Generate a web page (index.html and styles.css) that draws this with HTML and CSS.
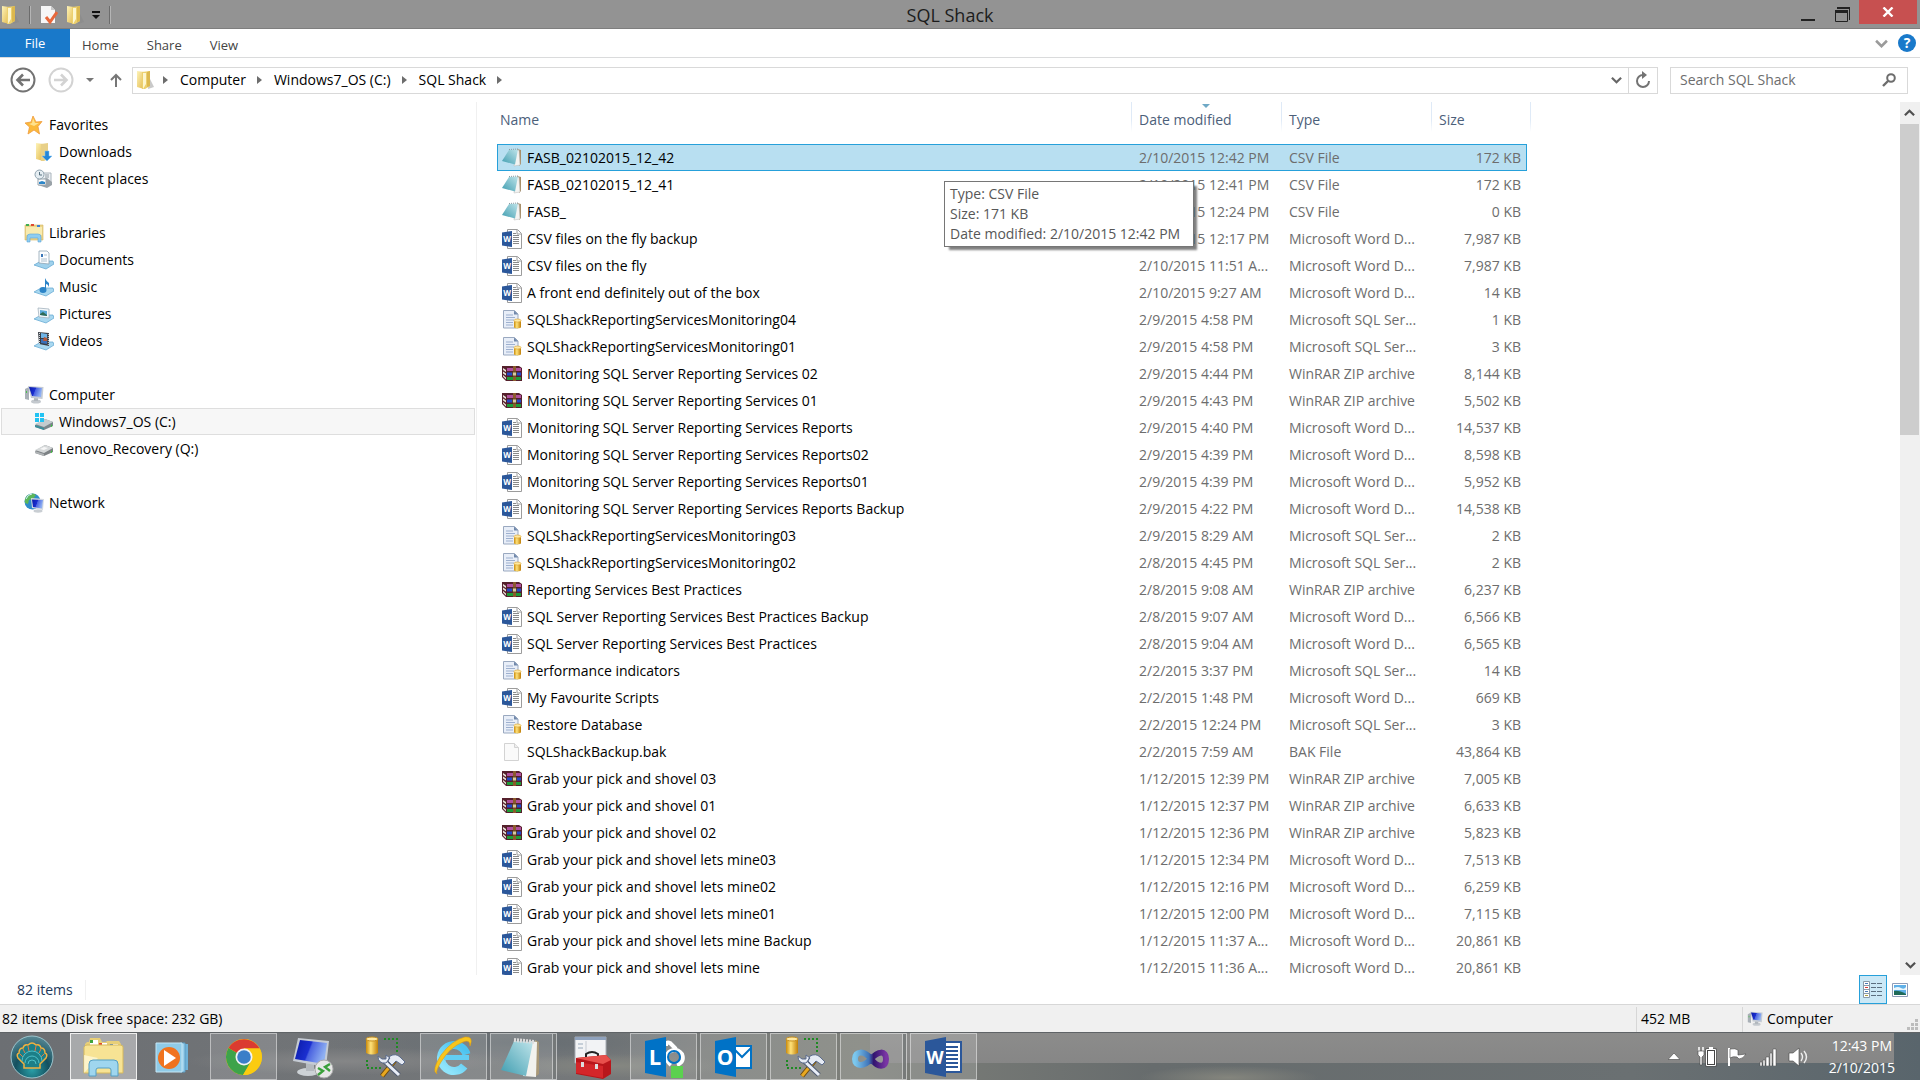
FILE: index.html
```html
<!DOCTYPE html>
<html lang="en">
<head>
    <meta charset="UTF-8">
    <meta name="viewport" content="width=device-width, initial-scale=1.0">
    <title>SQL Shack</title>
    <link rel="stylesheet" href="styles.css">
</head>
<body>
    <!-- icon sprite -->
    <svg class="sprite" aria-hidden="true">
        <defs>
            <linearGradient id="gFolder" x1="0" y1="0" x2="1" y2="1"><stop offset="0" stop-color="#fdf3b8"/><stop offset="1" stop-color="#e3b94c"/></linearGradient>
            <linearGradient id="gNote" x1="0" y1="1" x2="1" y2="0"><stop offset="0" stop-color="#3f9db0"/><stop offset="1" stop-color="#bfe4ea"/></linearGradient>
            <linearGradient id="gScreen" x1="0" y1="0" x2="1" y2=".3"><stop offset="0" stop-color="#0a1aa8"/><stop offset=".5" stop-color="#1b2fd0"/><stop offset=".55" stop-color="#4a62e0"/><stop offset="1" stop-color="#8fb0f2"/></linearGradient>
            <linearGradient id="gGold" x1="0" y1="0" x2="1" y2="0"><stop offset="0" stop-color="#c98a0c"/><stop offset=".4" stop-color="#ffe27a"/><stop offset="1" stop-color="#c07f08"/></linearGradient>
            <linearGradient id="gIE" x1="0" y1="0" x2="0" y2="1"><stop offset="0" stop-color="#4cc3f0"/><stop offset="1" stop-color="#8fe4fb"/></linearGradient>
            <linearGradient id="gVS" x1="0" y1="0" x2="1" y2="0"><stop offset="0" stop-color="#7cc8ee"/><stop offset=".45" stop-color="#3f74b8"/><stop offset=".6" stop-color="#32146e"/><stop offset="1" stop-color="#7a35a4"/></linearGradient>
            <radialGradient id="gOrb" cx=".5" cy=".8" r=".8"><stop offset="0" stop-color="#2aa0a8"/><stop offset=".5" stop-color="#14505f"/><stop offset="1" stop-color="#5a8a96"/></radialGradient>
        </defs>
        <symbol id="folder" viewBox="0 0 20 20">
            <path d="M14 7l5 10-6 2z" fill="#888" opacity=".45"/>
            <path d="M2 1l7 1v17l-7-2z" fill="url(#gFolder)"/>
            <path d="M7 2l8-1v15l-5 3H7z" fill="#ecd06e"/>
            <path d="M8 3h3v11l-3 5z" fill="#fdf6cf"/>
            <path d="M12 2l3-1v15l-3 1z" fill="#dcb84e"/>
        </symbol>
        <symbol id="downloads" viewBox="0 0 20 20">
            <path d="M2 1l7 1v17l-7-2z" fill="url(#gFolder)"/>
            <path d="M7 2l7-1v16l-4 2H7z" fill="#e8d088"/>
            <path d="M11 9h4v5h3l-5 5-5-5h3z" fill="#2486d8" stroke="#7fc0f0" stroke-width=".5"/>
        </symbol>
        <symbol id="star" viewBox="0 0 20 20">
            <path d="M9 1l3 6 6-.5-4 5L15.500 19 10 15l-6 4 1.500-7L1 8l6-1z" fill="#fbb93a" stroke="#ef9a3c" stroke-width=".8"/>
            <path d="M9 3l2 5 4 0-5 3-5-2 3-1z" fill="#ffe28c"/>
        </symbol>
        <symbol id="recent" viewBox="0 0 20 20">
            <path d="M7 4h10v9H7z" fill="#eef2f5" stroke="#aab4bc"/>
            <path d="M4 11l9-2 5 4v3l-5 3-9-3z" fill="#9aa2a8"/>
            <path d="M4 10h8v6H4z" fill="#fff" stroke="#98a4ad"/>
            <path d="M5 13l3-1 3 1v2H5z" fill="#2d86c8"/>
            <circle cx="5.500" cy="5.500" r="4.500" fill="#e5edf2" stroke="#8fa2ae"/>
            <path d="M5.500 3v3H8" stroke="#56707f" fill="none"/>
            <path d="M11 6h4M11 8h4" stroke="#8d99a2"/>
        </symbol>
        <symbol id="libraries" viewBox="0 0 20 20">
            <path d="M1 2h18v15H1z" fill="#ecd58a" stroke="#d3b65e" stroke-width=".6"/>
            <path d="M2 1h3v2H2z" fill="#3fae52"/><path d="M7 1h3v2H7z" fill="#e04a32"/><path d="M13 2h3v2h-3z" fill="#3a80d8"/>
            <path d="M2 4h16v8H2z" fill="#f8ebb0"/>
            <path d="M3 19v-5q0-3 3-3h8q3 0 3 3v5h-3v-4H6v4z" fill="#8fcdf0" stroke="#5aa6d8" stroke-width=".6"/>
        </symbol>
        <symbol id="documents" viewBox="0 0 20 20">
            <path d="M0 15l7-4h12l1 3-8 5z" fill="#9fd1ec" stroke="#5ba4d0" stroke-width=".7"/>
            <path d="M5 1h8l2 2v11L5 13z" fill="#fbfdff" stroke="#8fa4b4" stroke-width=".8"/>
            <path d="M7 4h2v3H7z" fill="#3976b8"/><path d="M10 5h3M7 9h6M7 11h6" stroke="#9ab0c2" stroke-width=".8"/>
        </symbol>
        <symbol id="music" viewBox="0 0 20 20">
            <path d="M0 15l7-4h12l1 3-8 5z" fill="#a9d8f0" stroke="#5ba4d0" stroke-width=".7"/>
            <ellipse cx="9" cy="13" rx="3.500" ry="3" fill="#2b84c8"/>
            <path d="M11 13V1q1 3 4 5v4q-1-3-3-3v6z" fill="#2b84c8"/>
        </symbol>
        <symbol id="pictures" viewBox="0 0 20 20">
            <path d="M0 15l7-4h12l1 3-8 5z" fill="#a9d8f0" stroke="#5ba4d0" stroke-width=".7"/>
            <path d="M4 4l11 1v9L5 13z" fill="#f4f8fa" stroke="#a3b3be" stroke-width=".8"/>
            <path d="M6 6l7 1v5l-7-1z" fill="#5aa8d8"/><path d="M6 10l3-2 4 3v1l-7-1z" fill="#2e6a54"/>
        </symbol>
        <symbol id="videos" viewBox="0 0 20 20">
            <path d="M0 15l7-4h12l1 3-8 5z" fill="#a9d8f0" stroke="#5ba4d0" stroke-width=".7"/>
            <path d="M4 1l11 1v13L5 13z" fill="#3a3f46"/>
            <path d="M7 2l6 1v4H7z" fill="#6fb4e6"/><path d="M7 8l6 0v5l-6-1z" fill="#3c70b8"/><path d="M10 6l3 1v3l-4 0z" fill="#b5583a"/>
            <path d="M5.500 2v11M14.300 3v11" stroke="#d5d9dd" stroke-dasharray="1 1"/>
        </symbol>
        <symbol id="computer" viewBox="0 0 20 20">
            <path d="M1 4l4-2v13l-4-1z" fill="#a9b0b7"/><path d="M2.500 6v2" stroke="#4cc04c"/>
            <ellipse cx="12" cy="16.500" rx="5" ry="2" fill="#c4c9ce"/>
            <path d="M10 12h4v4h-4z" fill="#b0b6bc"/>
            <path d="M4 1l15.500 1-1 12L7 13z" fill="#c6ccd4"/>
            <path d="M5 2l13 1-1 9-9-1z" fill="url(#gScreen)"/>
        </symbol>
        <symbol id="drivec" viewBox="0 0 20 20">
            <path d="M1 13l10-6 8 3v4l-9 4-9-3z" fill="#7b878c"/>
            <path d="M1 12l9 3 9-5-8-3z" fill="#c4cccf"/><path d="M1 13l9 3v2l-9-3z" fill="#3c8f9c"/>
            <path d="M17 13l1-.500v2l-1 .5z" fill="#37c837"/>
            <path d="M1 1h4v4H1zM6 1h4v4H6zM1 6h4v4H1zM6 6h4v4H6z" fill="#22c3f3"/>
        </symbol>
        <symbol id="drive" viewBox="0 0 20 20">
            <path d="M1 12l10-6 8 3v4l-9 4-9-3z" fill="#7d8285"/>
            <path d="M1 11l9 3 9-5-8-3z" fill="#d6d9da"/><path d="M1 12l9 3v2l-9-3z" fill="#b0b4b6"/>
            <path d="M6 10l4-2 4 1-4 2z" fill="#f7f7f7"/><path d="M17 12l1-.500v2l-1 .5z" fill="#37c837"/>
        </symbol>
        <symbol id="network" viewBox="0 0 20 20">
            <circle cx="8.500" cy="8.500" r="8" fill="#2f8ccb"/>
            <path d="M4 2q5-3 8 0l-3 4-4 1-1 4-3-1q-1-5 3-8z" fill="#5cb65a"/><path d="M2 6q2-5 6-5" stroke="#d5f0ff" fill="none"/>
            <ellipse cx="14" cy="18" rx="4.500" ry="1.700" fill="#c9ced3"/>
            <path d="M7 5l13 1-1 11-11-2z" fill="#d5dae0"/><path d="M8 6.500l11 .5-1 8.500-9-1.500z" fill="url(#gScreen)"/>
        </symbol>
        <symbol id="note" viewBox="0 0 20 20">
            <path d="M15 1l4 1v14l-2 2z" fill="#a88f6a"/><path d="M14 3l3-1 1 15-6 1z" fill="#f4f4f2" stroke="#bbb" stroke-width=".5"/>
            <path d="M7 2l9-.500-3 15L0 13z" fill="url(#gNote)"/><path d="M7 1.500l9-.500" stroke="#8a9aa0" stroke-width="1" stroke-dasharray="1 1"/>
        </symbol>
        <symbol id="word" viewBox="0 0 20 20">
            <path d="M5.500.500h10l4 4v15h-14z" fill="#fff" stroke="#9c9c9c"/><path d="M15 1v4h4" fill="none" stroke="#9c9c9c"/>
            <path d="M11 4.500h3M11 6.500h6M11 8.500h6M11 10.500h6M11 12.500h6M11 14.500h6" stroke="#8a8a8a"/>
            <path d="M0 3.500l10-1.500v16L0 16.500z" fill="#2b579a"/>
            <text x="5" y="13" class="glyph" font-size="8" text-anchor="middle">W</text>
        </symbol>
        <symbol id="sql" viewBox="0 0 20 20">
            <path d="M1.500.500h11l3.500 3.500v14H1.500z" fill="#e8eef8" stroke="#9aa9c0"/><path d="M12 .5v4h4z" fill="#6f87aa"/>
            <path d="M4 5h7M4 7.500h9M4 10h8M4 12.500h7M4 15h7" stroke="#9db0cf"/>
            <path d="M12 10.500v7q3.500 2 7 0v-7z" fill="url(#gGold)"/><ellipse cx="15.500" cy="10.500" rx="3.500" ry="1.500" fill="#ffe9a0" stroke="#d9a02c" stroke-width=".6"/>
        </symbol>
        <symbol id="rar" viewBox="0 0 20 20">
            <path d="M0 2h17l3 2v13H4l-4-4z" fill="#55202c"/>
            <path d="M5 4h14v3H5z" fill="#b0509c"/><path d="M5 8.500h14v3H5z" fill="#2448c8"/><path d="M5 13h14v3H5z" fill="#1f9c36"/>
            <path d="M1 4l3 2v2L1 6zM1 7.500l3 2v2l-3-2zM1 11l3 2.500v2l-3-3z" fill="#e8e4da"/>
            <path d="M11 2h3v15h-3z" fill="#8a5a2c"/><path d="M10.500 8h4v4h-4z" fill="#d8c8a0" stroke="#4c3010" stroke-width=".8"/>
        </symbol>
        <symbol id="blank" viewBox="0 0 20 20">
            <path d="M2.500 1.500h10l4 4v13h-14z" fill="#fafafa" stroke="#d3d3d3"/><path d="M12.500 1.500v4h4" fill="#eee" stroke="#d3d3d3"/>
        </symbol>
        <symbol id="arrow" viewBox="0 0 6 8"><path d="M0 0l5 4-5 4z" fill="#6d6d6d"/></symbol>
        <symbol id="chev" viewBox="0 0 12 8"><path d="M1 1.500l5 5 5-5" fill="none" stroke="currentColor" stroke-width="2.400"/></symbol>
        <symbol id="ssms" viewBox="0 0 44 44">
            <path d="M4 4v14q6 3 12 0V4z" fill="url(#gGold)"/><ellipse cx="10" cy="4" rx="6" ry="2" fill="#ffe9a0" stroke="#c58d1c"/>
            <path d="M22 4h13v13M5 25v8h14" fill="none" stroke="#1d8a22" stroke-width="2" stroke-dasharray="2 2"/>
            <path d="M20 41l14-17" stroke="#6b4a10" stroke-width="5"/><path d="M20 41l14-17" stroke="#e8a820" stroke-width="3"/>
            <path d="M21 25l16 15" stroke="#4f5a70" stroke-width="5"/><path d="M21 25l16 15" stroke="#e9eef8" stroke-width="3"/>
            <path d="M16 21q0 8 8 7l4-5-4-3v4l-4 0zM28 21q6-3 10 1l5 5-3 3-6-4-4 4-4-4z" fill="#e6ebf4" stroke="#5c6c8c"/>
        </symbol>
    </svg>

    <header class="titlebar">
        <div class="quick">
            <svg class="ico" width="20" height="20"><use href="#folder"/></svg>
            <span class="bar"></span>
            <button type="button" aria-label="Properties"><svg width="18" height="20" viewBox="0 0 18 20"><path d="M1 1h10l4 4v13H1z" fill="#f7f7f7"/><path d="M11 1v4h4z" fill="#c8c8c8"/><path d="M6 12l4 5 7-10" fill="none" stroke="#e8683c" stroke-width="3"/></svg></button>
            <button type="button" aria-label="New folder"><svg width="20" height="20"><use href="#folder"/></svg></button>
            <button type="button" aria-label="Customize"><svg width="8" height="8" viewBox="0 0 8 8"><path d="M0 0h8v2H0zM0 4h8L4 8z" fill="#111"/></svg></button>
            <span class="bar"></span>
        </div>
        <h1>SQL Shack</h1>
        <div class="winbtns">
            <button type="button" aria-label="Minimize"><svg width="14" height="20" viewBox="0 0 14 20"><path d="M0 14h14v2H0z" fill="#222"/></svg></button>
            <button type="button" aria-label="Restore"><svg width="16" height="16" viewBox="0 0 16 16"><path d="M2 0h13v13h-1V2H2z" fill="#222"/><path d="M.5 3.500h12v11H.5z" fill="none" stroke="#222"/><path d="M0 3h13v3H0z" fill="#222"/></svg></button>
            <button type="button" class="close" aria-label="Close"><svg width="12" height="10" viewBox="0 0 12 10"><path d="M1.500.500l9 9M10.500.500l-9 9" stroke="#fff" stroke-width="2.400"/></svg></button>
        </div>
    </header>

    <nav class="ribbon">
        <button type="button" class="file">File</button>
        <button type="button">Home</button>
        <button type="button">Share</button>
        <button type="button">View</button>
        <div class="ribbon-right">
            <svg class="chev-light" width="13" height="9"><use href="#chev"/></svg>
            <svg width="18" height="18" viewBox="0 0 18 18"><circle cx="9" cy="9" r="9" fill="#1979ca"/><text x="9" y="14" class="glyph" font-size="14" text-anchor="middle">?</text></svg>
        </div>
    </nav>

    <div class="addressbar">
        <button type="button" aria-label="Back"><svg width="26" height="26" viewBox="0 0 26 26"><circle cx="13" cy="13" r="11.500" fill="none" stroke="#737373" stroke-width="2"/><path d="M20 13H8M13 7.500L7.500 13l5.500 5.500" fill="none" stroke="#737373" stroke-width="2.600"/></svg></button>
        <button type="button" aria-label="Forward"><svg width="26" height="26" viewBox="0 0 26 26"><circle cx="13" cy="13" r="11.500" fill="none" stroke="#d3d3d3" stroke-width="2"/><path d="M6 13h12M13 7.500l5.500 5.500-5.500 5.500" fill="none" stroke="#d3d3d3" stroke-width="2.600"/></svg></button>
        <button type="button" aria-label="Recent locations"><svg width="8" height="5" viewBox="0 0 8 5"><path d="M0 0h8L4 4z" fill="#777"/></svg></button>
        <button type="button" class="go-up" aria-label="Up"><svg width="12" height="14" viewBox="0 0 12 14"><path d="M6 14V2M1 7l5-5 5 5" fill="none" stroke="#777" stroke-width="2"/></svg></button>
        <div class="path">
            <svg class="ico" width="20" height="20"><use href="#folder"/></svg>
            <svg width="6" height="8"><use href="#arrow"/></svg>
            <a href="#">Computer</a>
            <svg width="6" height="8"><use href="#arrow"/></svg>
            <a href="#">Windows7_OS (C:)</a>
            <svg width="6" height="8"><use href="#arrow"/></svg>
            <a href="#">SQL Shack</a>
            <svg width="6" height="8"><use href="#arrow"/></svg>
            <button type="button" class="drop" aria-label="Previous locations"><svg width="11" height="8"><use href="#chev"/></svg></button>
            <button type="button" class="refresh" aria-label="Refresh"><svg width="16" height="18" viewBox="0 0 16 18"><path d="M8 4A6 6 0 1 0 14 10" fill="none" stroke="#737373" stroke-width="2"/><path d="M7 0l5 4-5 4z" fill="#737373"/></svg></button>
        </div>
        <div class="search">
            <input type="text" placeholder="Search SQL Shack" aria-label="Search SQL Shack">
            <svg width="14" height="14" viewBox="0 0 14 14"><circle cx="9" cy="5" r="3.800" fill="none" stroke="#6d6d6d" stroke-width="2"/><path d="M6 8l-5 5" stroke="#6d6d6d" stroke-width="2.400"/></svg>
        </div>
    </div>

    <main class="content">
        <aside class="tree">
            <ul>
                <li><a href="#"><svg><use href="#star"/></svg>Favorites</a></li>
                <li class="sub"><a href="#"><svg><use href="#downloads"/></svg>Downloads</a></li>
                <li class="sub"><a href="#"><svg><use href="#recent"/></svg>Recent places</a></li>
            </ul>
            <ul>
                <li><a href="#"><svg><use href="#libraries"/></svg>Libraries</a></li>
                <li class="sub"><a href="#"><svg><use href="#documents"/></svg>Documents</a></li>
                <li class="sub"><a href="#"><svg><use href="#music"/></svg>Music</a></li>
                <li class="sub"><a href="#"><svg><use href="#pictures"/></svg>Pictures</a></li>
                <li class="sub"><a href="#"><svg><use href="#videos"/></svg>Videos</a></li>
            </ul>
            <ul>
                <li><a href="#"><svg><use href="#computer"/></svg>Computer</a></li>
                <li class="sub current"><a href="#"><svg><use href="#drivec"/></svg>Windows7_OS (C:)</a></li>
                <li class="sub"><a href="#"><svg><use href="#drive"/></svg>Lenovo_Recovery (Q:)</a></li>
            </ul>
            <ul>
                <li><a href="#"><svg><use href="#network"/></svg>Network</a></li>
            </ul>
        </aside>

        <section class="list">
            <table>
                <colgroup><col class="c-name"><col class="c-date"><col class="c-type"><col class="c-size"></colgroup>
                <thead>
                    <tr><th>Name</th><th class="sorted">Date modified</th><th>Type</th><th>Size</th></tr>
                </thead>
                <tbody>
                    <tr class="selected"><td><svg><use href="#note"/></svg>FASB_02102015_12_42</td><td>2/10/2015 12:42 PM</td><td>CSV File</td><td>172 KB</td></tr>
                    <tr><td><svg><use href="#note"/></svg>FASB_02102015_12_41</td><td>2/10/2015 12:41 PM</td><td>CSV File</td><td>172 KB</td></tr>
                    <tr><td><svg><use href="#note"/></svg>FASB_</td><td>2/10/2015 12:24 PM</td><td>CSV File</td><td>0 KB</td></tr>
                    <tr><td><svg><use href="#word"/></svg>CSV files on the fly backup</td><td>2/10/2015 12:17 PM</td><td>Microsoft Word D...</td><td>7,987 KB</td></tr>
                    <tr><td><svg><use href="#word"/></svg>CSV files on the fly</td><td>2/10/2015 11:51 A...</td><td>Microsoft Word D...</td><td>7,987 KB</td></tr>
                    <tr><td><svg><use href="#word"/></svg>A front end definitely out of the box</td><td>2/10/2015 9:27 AM</td><td>Microsoft Word D...</td><td>14 KB</td></tr>
                    <tr><td><svg><use href="#sql"/></svg>SQLShackReportingServicesMonitoring04</td><td>2/9/2015 4:58 PM</td><td>Microsoft SQL Ser...</td><td>1 KB</td></tr>
                    <tr><td><svg><use href="#sql"/></svg>SQLShackReportingServicesMonitoring01</td><td>2/9/2015 4:58 PM</td><td>Microsoft SQL Ser...</td><td>3 KB</td></tr>
                    <tr><td><svg><use href="#rar"/></svg>Monitoring SQL Server Reporting Services 02</td><td>2/9/2015 4:44 PM</td><td>WinRAR ZIP archive</td><td>8,144 KB</td></tr>
                    <tr><td><svg><use href="#rar"/></svg>Monitoring SQL Server Reporting Services 01</td><td>2/9/2015 4:43 PM</td><td>WinRAR ZIP archive</td><td>5,502 KB</td></tr>
                    <tr><td><svg><use href="#word"/></svg>Monitoring SQL Server Reporting Services Reports</td><td>2/9/2015 4:40 PM</td><td>Microsoft Word D...</td><td>14,537 KB</td></tr>
                    <tr><td><svg><use href="#word"/></svg>Monitoring SQL Server Reporting Services Reports02</td><td>2/9/2015 4:39 PM</td><td>Microsoft Word D...</td><td>8,598 KB</td></tr>
                    <tr><td><svg><use href="#word"/></svg>Monitoring SQL Server Reporting Services Reports01</td><td>2/9/2015 4:39 PM</td><td>Microsoft Word D...</td><td>5,952 KB</td></tr>
                    <tr><td><svg><use href="#word"/></svg>Monitoring SQL Server Reporting Services Reports Backup</td><td>2/9/2015 4:22 PM</td><td>Microsoft Word D...</td><td>14,538 KB</td></tr>
                    <tr><td><svg><use href="#sql"/></svg>SQLShackReportingServicesMonitoring03</td><td>2/9/2015 8:29 AM</td><td>Microsoft SQL Ser...</td><td>2 KB</td></tr>
                    <tr><td><svg><use href="#sql"/></svg>SQLShackReportingServicesMonitoring02</td><td>2/8/2015 4:45 PM</td><td>Microsoft SQL Ser...</td><td>2 KB</td></tr>
                    <tr><td><svg><use href="#rar"/></svg>Reporting Services Best Practices</td><td>2/8/2015 9:08 AM</td><td>WinRAR ZIP archive</td><td>6,237 KB</td></tr>
                    <tr><td><svg><use href="#word"/></svg>SQL Server Reporting Services Best Practices Backup</td><td>2/8/2015 9:07 AM</td><td>Microsoft Word D...</td><td>6,566 KB</td></tr>
                    <tr><td><svg><use href="#word"/></svg>SQL Server Reporting Services Best Practices</td><td>2/8/2015 9:04 AM</td><td>Microsoft Word D...</td><td>6,565 KB</td></tr>
                    <tr><td><svg><use href="#sql"/></svg>Performance indicators</td><td>2/2/2015 3:37 PM</td><td>Microsoft SQL Ser...</td><td>14 KB</td></tr>
                    <tr><td><svg><use href="#word"/></svg>My Favourite Scripts</td><td>2/2/2015 1:48 PM</td><td>Microsoft Word D...</td><td>669 KB</td></tr>
                    <tr><td><svg><use href="#sql"/></svg>Restore Database</td><td>2/2/2015 12:24 PM</td><td>Microsoft SQL Ser...</td><td>3 KB</td></tr>
                    <tr><td><svg><use href="#blank"/></svg>SQLShackBackup.bak</td><td>2/2/2015 7:59 AM</td><td>BAK File</td><td>43,864 KB</td></tr>
                    <tr><td><svg><use href="#rar"/></svg>Grab your pick and shovel 03</td><td>1/12/2015 12:39 PM</td><td>WinRAR ZIP archive</td><td>7,005 KB</td></tr>
                    <tr><td><svg><use href="#rar"/></svg>Grab your pick and shovel 01</td><td>1/12/2015 12:37 PM</td><td>WinRAR ZIP archive</td><td>6,633 KB</td></tr>
                    <tr><td><svg><use href="#rar"/></svg>Grab your pick and shovel 02</td><td>1/12/2015 12:36 PM</td><td>WinRAR ZIP archive</td><td>5,823 KB</td></tr>
                    <tr><td><svg><use href="#word"/></svg>Grab your pick and shovel lets mine03</td><td>1/12/2015 12:34 PM</td><td>Microsoft Word D...</td><td>7,513 KB</td></tr>
                    <tr><td><svg><use href="#word"/></svg>Grab your pick and shovel lets mine02</td><td>1/12/2015 12:16 PM</td><td>Microsoft Word D...</td><td>6,259 KB</td></tr>
                    <tr><td><svg><use href="#word"/></svg>Grab your pick and shovel lets mine01</td><td>1/12/2015 12:00 PM</td><td>Microsoft Word D...</td><td>7,115 KB</td></tr>
                    <tr><td><svg><use href="#word"/></svg>Grab your pick and shovel lets mine Backup</td><td>1/12/2015 11:37 A...</td><td>Microsoft Word D...</td><td>20,861 KB</td></tr>
                    <tr><td><svg><use href="#word"/></svg>Grab your pick and shovel lets mine</td><td>1/12/2015 11:36 A...</td><td>Microsoft Word D...</td><td>20,861 KB</td></tr>
                </tbody>
            </table>
            <div class="tooltip" role="tooltip">
                <p>Type: CSV File</p>
                <p>Size: 171 KB</p>
                <p>Date modified: 2/10/2015 12:42 PM</p>
            </div>
        </section>

        <div class="scrollbar">
            <button type="button" class="up" aria-label="Scroll up"><svg width="11" height="8"><use href="#chev"/></svg></button>
            <div class="thumb"></div>
            <button type="button" class="down" aria-label="Scroll down"><svg width="11" height="8"><use href="#chev"/></svg></button>
        </div>
    </main>

    <div class="details">
        <span>82 items</span>
        <div class="views">
            <button type="button" class="active" aria-label="Details view"><svg width="20" height="18" viewBox="0 0 20 18"><path d="M.5.500h6v16h-6zM.5 4.500h6M.5 8.500h6M.5 12.500h6" fill="#fff" stroke="#8a9aa8"/><path d="M2 2.500h3M2 10.500h3" stroke="#4a7ab8"/><path d="M2 6.500h3" stroke="#d83a3a"/><path d="M2 14.500h3" stroke="#b0a040"/><path d="M8 2.500h5M14 2.500h5M8 6.500h5M14 6.500h5M8 10.500h5M14 10.500h5M8 14.500h5M14 14.500h5" stroke="#5c6f80"/></svg></button>
            <button type="button" aria-label="Large icons"><svg width="16" height="14" viewBox="0 0 16 14"><path d="M.5.500h15v13H.5z" fill="#fff" stroke="#8d9cb8"/><path d="M2 2h12v10H2z" fill="#5fb0e8"/><path d="M2 5q4-2 7 0t5-1v3H2z" fill="#e8f6fc"/><path d="M2 8q5-1 12 3v1H2z" fill="#1f6a58"/></svg></button>
        </div>
    </div>

    <footer class="status">
        <span class="s-main">82 items (Disk free space: 232 GB)</span>
        <span class="s-size">452 MB</span>
        <span class="s-zone"><svg width="16" height="16"><use href="#computer"/></svg>Computer</span>
        <svg class="grip" width="12" height="12" viewBox="0 0 12 12"><path d="M8 0h3v3H8zM4 4h3v3H4zM8 4h3v3H8zM0 8h3v3H0zM4 8h3v3H4zM8 8h3v3H8z" fill="#bcbcbc"/></svg>
    </footer>

    <div class="taskbar">
        <button type="button" class="start" aria-label="Start"><svg width="44" height="44" viewBox="0 0 44 44">
            <circle cx="22" cy="22" r="21" fill="url(#gOrb)" stroke="#9cc4cc"/>
            <path d="M14 33v-4l-6-6q-2-4 1-5 0-5 4-5 1-4 5-3 4-4 8 0 4-1 5 3 4 0 4 5 3 1 1 5l-6 6v4z" fill="#1c7f88" stroke="#f0b040" stroke-width="1.500"/>
            <path d="M13 14l2 4M18 11l1 5M26 11l-1 5M31 14l-2 4M10 19l3 3M34 19l-3 3" stroke="#e87840"/>
            <path d="M12 26a10 10 0 0 1 20 0M15 28a7 7 0 0 1 14 0M18 29a4 4 0 0 1 8 0" fill="none" stroke="#4fc0c8"/></svg></button>
        <button type="button" class="open focus" aria-label="File Explorer"><svg width="44" height="44" viewBox="0 0 44 44">
            <path d="M5 7h2l1-4h10l2 4h4l1-1h12l2 3v26H3V9z" fill="#e8cf78"/>
            <path d="M8 5h8v5H8z" fill="#fff"/><path d="M8 5h3v3H8z" fill="#3fa53c"/><path d="M17 8h8v4h-8z" fill="#fff"/><path d="M17 8h3v3h-3z" fill="#e24a2a"/><path d="M28 9h8v4h-8z" fill="#fff"/><path d="M28 9h3v3h-3z" fill="#3680d0"/>
            <path d="M2 12q1-2 3-2h33q3 0 3 2v26H2z" fill="#f7e394" stroke="#d6b95c"/>
            <path d="M2 20l14 3L2 38z" fill="#fffbe0" opacity=".7"/>
            <path d="M7 41V29q0-4 4-4h21q4 0 4 4v12h-7v-6q0-2-2-2H16q-2 0-2 2v6z" fill="#9fd6ef" stroke="#559fc4"/></svg></button>
        <button type="button" aria-label="Media Player"><svg width="44" height="44" viewBox="0 0 44 44">
            <path d="M31 9h5v26h-5z" fill="#6fb2d8"/><path d="M28 8h5v29h-5z" fill="#9ad0ec" stroke="#5a9cc4"/>
            <path d="M4 8h26v29H4z" fill="#8fcbe8" stroke="#c5e6f5"/><circle cx="17" cy="23" r="11" fill="#f0731f"/><path d="M12 15l12 8-12 8z" fill="#fff"/></svg></button>
        <button type="button" class="open" aria-label="Chrome"><svg width="40" height="40" viewBox="0 0 40 40">
            <circle cx="20" cy="20" r="18" fill="#f9c80e"/>
            <path d="M20 20L4.500 11A18 18 0 0 1 35.600 11.500H20z" fill="#db3b30"/>
            <path d="M20 20L4.400 11A18 18 0 0 0 19 38l8-14z" fill="#3da34a"/>
            <path d="M20 11.500h15.600A18 18 0 0 1 19 38l9-14z" fill="#fbcb10"/>
            <circle cx="20" cy="20" r="8.500" fill="#f4f4f4"/><circle cx="20" cy="20" r="6.800" fill="#3b7fc8"/></svg></button>
        <button type="button" aria-label="Remote Desktop"><svg width="44" height="44" viewBox="0 0 44 44">
            <ellipse cx="16" cy="37" rx="11" ry="4" fill="#cdd2d6"/><path d="M14 28h8v8h-8z" fill="#b5babf"/>
            <path d="M6 3l31 3-3 26L1 26z" fill="#c5cbd4"/><path d="M8 5l27 3-3 21L3 24z" fill="url(#gScreen)"/>
            <circle cx="32" cy="34" r="9" fill="#e6e6e6" stroke="#aaa"/><path d="M26 33l5 3-5 4M38 29l-5 3 5 4" fill="none" stroke="#3aa03a" stroke-width="2.400"/></svg></button>
        <button type="button" aria-label="Management Studio"><svg width="44" height="44"><use href="#ssms"/></svg></button>
        <button type="button" class="open" aria-label="Internet Explorer"><svg width="44" height="44" viewBox="0 0 44 44">
            <circle cx="22" cy="23" r="13" fill="none" stroke="url(#gIE)" stroke-width="8" stroke-dasharray="69 13" transform="rotate(38 22 23)"/>
            <path d="M12 20h25v5H12z" fill="#62cdf3"/>
            <path d="M5 39Q-1 36 9 20 20 5 33 2q9-1 5 9 0-7-7-4Q18 12 9 27q-6 10-4 12z" fill="#f8c51c" stroke="#e0a010" stroke-width=".6"/></svg></button>
        <button type="button" class="open stacked" aria-label="Notepad"><svg width="44" height="44" viewBox="0 0 44 44">
            <path d="M35 5l4 2v32l-4 3z" fill="#a89878"/><path d="M30 6l7 1-1 35-13-1z" fill="#f2f2ee"/>
            <path d="M14 6l19 1-7 34L1 35z" fill="url(#gNote)"/><path d="M14 5l21 2" stroke="#dcdcdc" stroke-width="4" stroke-dasharray="2 1"/></svg></button>
        <button type="button" aria-label="Toolbox"><svg width="44" height="44" viewBox="0 0 44 44">
            <path d="M3 2h31v26H3z" fill="#f2f3f5" stroke="#a8adb5"/><path d="M3 2h31v3H3z" fill="#8fa2bd"/><path d="M6 9h5M6 13h5" stroke="#9ab"/><path d="M14 6v20" stroke="#c5cad2"/>
            <path d="M14 22v-3q6-4 12 0v3" fill="none" stroke="#222" stroke-width="2"/>
            <path d="M4 23l30-3 5 5v14l-8 5-27-5z" fill="#b8161b"/><path d="M4 23l30-3 5 5-8 4z" fill="#e8504c"/><path d="M4 27l27 4v12L4 38z" fill="#d4262a"/>
            <path d="M9 27h3v5H9zM23 29h3v5h-3z" fill="#ddd"/></svg></button>
        <button type="button" class="open" aria-label="Lync"><svg width="44" height="44" viewBox="0 0 44 44">
            <path d="M24 11q0-5 4-3l6 6M29 30q-8-7-2-13 7-5 13 2 3 8-5 11" fill="none" stroke="#fff" stroke-width="4"/><circle cx="32" cy="22" r="6" fill="none" stroke="#0072c6" stroke-width="2"/>
            <path d="M3 6l21-4v40L3 38z" fill="#0072c6"/><text x="13" y="30" class="glyph" font-size="22" text-anchor="middle">L</text><path d="M29 31h12v12H29z" fill="#5bd14f"/></svg></button>
        <button type="button" class="open" aria-label="Outlook"><svg width="44" height="44" viewBox="0 0 44 44">
            <path d="M22 11h17v22H22z" fill="#fff" stroke="#0072c6" stroke-width="2"/><path d="M22 14l8 8 9-9" fill="none" stroke="#0072c6" stroke-width="2"/>
            <path d="M3 6l21-4v40L3 38z" fill="#0072c6"/><text x="13" y="30" class="glyph" font-size="21" text-anchor="middle">O</text></svg></button>
        <button type="button" class="open" aria-label="Management Studio"><svg width="44" height="44"><use href="#ssms"/></svg></button>
        <button type="button" class="open stacked" aria-label="Visual Studio"><svg width="44" height="44" viewBox="0 0 44 44">
            <path d="M21 24C14 15 5 16 5 24s9 8 16 0 15-9 15 0-8 9-15 0z" fill="none" stroke="url(#gVS)" stroke-width="6"/></svg></button>
        <button type="button" class="open" aria-label="Word"><svg width="44" height="44" viewBox="0 0 44 44">
            <path d="M22 7h17v30H22z" fill="#fff" stroke="#2b579a" stroke-width="2"/><path d="M24 12h12M24 16h12M24 20h12M24 24h12M24 28h12M24 32h12" stroke="#2b579a" stroke-width="2"/>
            <path d="M3 6l21-4v40L3 38z" fill="#2b579a"/><text x="13" y="29" class="glyph" font-size="18" text-anchor="middle">W</text></svg></button>

        <div class="tray">
            <svg width="12" height="7" viewBox="0 0 12 7"><path d="M0 6.500L6 0l6 6.500z" fill="#fff" stroke="#555" stroke-width=".7"/></svg>
            <svg width="20" height="22" viewBox="0 0 20 22"><path d="M2 1v4M6 1v4" stroke="#fff" stroke-width="1.500"/><path d="M1 5h6v4L5 11v8H3v-8L1 9z" fill="#fff" stroke="#444" stroke-width=".6"/><path d="M8.500 2.500h11v18h-11z" fill="#444"/><path d="M9.500 3.500h9v16h-9z" fill="#444" stroke="#fff"/><path d="M12 1h4v2h-4zM11 5h6v13h-6z" fill="#fff"/></svg>
            <svg width="20" height="20" viewBox="0 0 20 20"><path d="M1 1v18" stroke="#fff" stroke-width="2"/><path d="M2 2q5-1 8 1v5l8-1q-3 5-7 5l-2-2q-4-1-7 1z" fill="#fff" stroke="#444" stroke-width=".6"/></svg>
            <svg width="18" height="18" viewBox="0 0 18 18"><path d="M1 14h2v4H1zM4 12h2v6H4zM7 9h3v9H7zM11 5h2v13h-2zM14 1h3v17h-3z" fill="#fff" stroke="#444" stroke-width=".5"/></svg>
            <svg width="22" height="20" viewBox="0 0 22 20"><path d="M1 6h4l6-5v18l-6-5H1z" fill="#fff" stroke="#444" stroke-width=".6"/><path d="M13 6q3 4 0 8M16 4q5 6 0 12" fill="none" stroke="#eee" stroke-width="1.400"/></svg>
            <div class="clock"><span>12:43 PM</span><span>2/10/2015</span></div>
        </div>
    </div>
</body>
</html>
```
FILE: styles.css
```css
* {
    box-sizing: border-box;
}

body {
    margin: 0;
    height: 100vh;
    display: flex;
    flex-direction: column;
    overflow: hidden;
    background-color: #fff;
    color: #000;
    font-family: "Open Sans", "Noto Sans", sans-serif;
    font-size: 14px;
    line-height: 20px;
}

button {
    padding: 0;
    border: 0;
    background: none;
    font: inherit;
    color: inherit;
}

a {
    color: inherit;
    text-decoration: none;
}

svg {
    display: block;
    flex: none;
}

ul, p, h1 {
    margin: 0;
    padding: 0;
    list-style: none;
}

.sprite {
    position: absolute;
    width: 0;
    height: 0;
}

.glyph {
    fill: #fff;
    font-family: "Open Sans", sans-serif;
    font-weight: bold;
}

/* title bar */
.titlebar {
    flex: none;
    display: grid;
    grid-template-columns: 1fr auto 1fr;
    height: 29px;
    background-color: #939393;
    border-bottom: 1px solid #7e7e7e;
}

.titlebar h1 {
    padding-right: 20px;
    font-size: 18px;
    font-weight: normal;
    line-height: 30px;
    color: #1c1c1c;
}

.quick {
    display: flex;
    align-items: center;
    gap: 7px;
}

.bar {
    width: 2px;
    height: 18px;
    margin: 0 2px;
    background-color: #6c6c6c;
    border-right: 1px solid #b5b5b5;
}

.winbtns {
    display: flex;
    justify-content: flex-end;
    align-items: center;
    gap: 20px;
    padding-right: 3px;
}

.winbtns button {
    height: 24px;
}

.close {
    display: flex;
    align-items: center;
    justify-content: center;
    align-self: flex-start;
    width: 58px;
    margin-left: -12px;
    background-color: #c75050;
}

/* ribbon tabs */
.ribbon {
    flex: none;
    display: flex;
    align-items: center;
    gap: 28px;
    height: 29px;
    border-bottom: 1px solid #dadbdc;
    color: #444;
    font-size: 13px;
}

.ribbon button {
    padding-top: 3px;
}

.ribbon .file {
    align-self: stretch;
    width: 70px;
    margin-right: -16px;
    padding: 0;
    background-color: #1979ca;
    color: #fff;
}

.ribbon-right {
    display: flex;
    align-items: center;
    gap: 10px;
    margin-left: auto;
    padding-right: 4px;
}

.chev-light {
    color: #9b9b9b;
}

/* address bar */
.addressbar {
    flex: none;
    display: flex;
    align-items: center;
    gap: 12px;
    height: 44px;
    padding: 0 12px 0 10px;
}

.go-up {
    margin: 0 -2px 0 4px;
}

.path {
    flex: 1;
    display: flex;
    align-items: center;
    gap: 11px;
    height: 27px;
    padding-left: 2px;
    border: 1px solid #d9d9d9;
}

.path .ico {
    margin-right: -3px;
}

.drop {
    margin-left: auto;
    margin-right: -5px;
    color: #666;
}

.refresh {
    display: flex;
    align-items: center;
    justify-content: center;
    align-self: stretch;
    width: 29px;
    border-left: 1px solid #d9d9d9;
}

.search {
    display: flex;
    align-items: center;
    width: 238px;
    height: 27px;
    padding: 0 11px 0 9px;
    border: 1px solid #d9d9d9;
}

.search input {
    flex: 1;
    min-width: 0;
    padding: 0;
    border: 0;
    outline: 0;
    background: none;
    font: inherit;
}

.search input::placeholder {
    color: #6d6d6d;
}

/* main area */
.content {
    flex: 1;
    min-height: 0;
    display: flex;
}

.tree {
    flex: none;
    width: 477px;
    padding: 9px 1px 0;
    border-right: 1px solid #f0f0f0;
}

.tree ul {
    margin-bottom: 27px;
}

.tree a {
    display: flex;
    align-items: center;
    gap: 5px;
    height: 27px;
    padding-left: 22px;
    border: 1px solid transparent;
}

.tree .sub a {
    padding-left: 32px;
}

.tree .current a {
    background-color: #f7f7f7;
    border-color: #dedede;
}

.tree svg, .list td svg {
    width: 20px;
    height: 20px;
}

.list {
    flex: 1;
    position: relative;
    min-width: 0;
    padding-left: 20px;
    overflow: hidden;
}

.list table {
    width: 1030px;
    table-layout: fixed;
    border-collapse: separate;
    border-spacing: 0;
}

.c-name {
    width: 634px;
}

.c-date, .c-type {
    width: 150px;
}

.c-size {
    width: 96px;
}

.list th {
    position: relative;
    height: 42px;
    padding: 8px 0 0 8px;
    vertical-align: top;
    text-align: left;
    font-weight: normal;
    color: #4c607a;
}

.list th:first-child {
    padding-left: 3px;
}

/* column dividers fade out towards the rows */
.list th::after {
    content: "";
    position: absolute;
    top: 0;
    right: -1px;
    width: 1px;
    height: 30px;
    background: linear-gradient(#dfeaf7 60%, #fff);
}

.list th:last-child::after {
    right: -4px;
}

.sorted::before {
    content: "";
    position: absolute;
    top: 2px;
    left: 71px;
    border: 4px solid transparent;
    border-top-color: #6fa9c6;
    border-bottom: 0;
}

.list td {
    height: 27px;
    padding: 0 0 0 8px;
    border: 1px solid transparent;
    border-width: 1px 0;
    white-space: nowrap;
    color: #6d6d6d;
}

.list td:first-child {
    display: flex;
    align-items: center;
    gap: 5px;
    padding-left: 5px;
    color: #000;
}

.list td:last-child {
    padding: 0 6px 0 0;
    text-align: right;
}

.selected td {
    background-color: #b8dff1;
    border-color: #26a0da;
}

.list .selected td:first-child {
    padding-left: 4px;
    border-left-width: 1px;
}

.list .selected td:last-child {
    padding-right: 5px;
    border-right-width: 1px;
}

.tooltip {
    position: absolute;
    top: 79px;
    left: 467px;
    min-width: 250px;
    padding: 2px 5px;
    border: 1px solid #767676;
    background-color: #fff;
    color: #575757;
    box-shadow: 4px 4px 2px -1px rgba(0, 0, 0, 0.5);
    white-space: nowrap;
}

.scrollbar {
    flex: none;
    display: flex;
    flex-direction: column;
    width: 20px;
    padding-top: 1px;
    background-color: #f0f0f0;
    color: #505050;
}

.scrollbar button {
    display: flex;
    align-items: center;
    justify-content: center;
    height: 21px;
}

.scrollbar .up {
    transform: rotate(180deg);
}

.thumb {
    height: 311px;
    margin-right: 1px;
    background-color: #cdcdcd;
}

.scrollbar .down {
    margin-top: auto;
}

/* bottom bars */
.details {
    flex: none;
    display: flex;
    align-items: center;
    justify-content: space-between;
    height: 29px;
    padding: 0 12px 0 17px;
    color: #1e395b;
}

.details > span {
    padding-right: 12px;
    border-right: 1px solid #f0f0f0;
}

.views {
    display: flex;
    align-items: center;
    gap: 5px;
    height: 29px;
}

.views .active {
    display: flex;
    align-items: center;
    justify-content: center;
    width: 28px;
    height: 29px;
    background-color: #cbe8f6;
    border: 1px solid #26a0da;
}

.status {
    flex: none;
    position: relative;
    display: flex;
    align-items: center;
    height: 28px;
    padding-top: 1px;
    background-color: #f0f0f0;
    border-top: 1px solid #d7d7d7;
}

.status span {
    display: flex;
    align-items: center;
    gap: 4px;
    height: 25px;
    padding-left: 4px;
    border-left: 1px solid #d7d7d7;
}

.status .s-main {
    flex: 1;
    padding-left: 2px;
    border-left: 0;
}

.status .s-size {
    width: 106px;
}

.status .s-zone {
    width: 178px;
}

.grip {
    position: absolute;
    right: 1px;
    bottom: 1px;
}

.taskbar {
    flex: none;
    display: flex;
    gap: 3px;
    height: 48px;
    padding-right: 25px;
    border-top: 1px solid #5f6366;
    background:
        linear-gradient(#8c8c8b, #868686) 870px 0 / calc(100% - 896px) 30px no-repeat,
        radial-gradient(ellipse 160px 14px at 18% 60%, #858687, transparent),
        radial-gradient(ellipse 120px 12px at 32% 70%, #858781, transparent),
        radial-gradient(ellipse 90px 12px at 64% 95%, #84857d, transparent),
        radial-gradient(ellipse 200px 20px at 27% 20%, #666d72, transparent),
        linear-gradient(90deg, #6c6f73, #75787a 30%, #7d7f79 45%, #676c6d 60%, #6a7072 85%, #59656c);
}

.taskbar > button {
    display: flex;
    align-items: center;
    justify-content: center;
    width: 67px;
    border: 1px solid transparent;
}

.taskbar .start {
    width: 64px;
}

.taskbar .start + button {
    margin-left: 3px;
}

.taskbar .open {
    background-color: rgba(255, 255, 255, 0.14);
    border-color: rgba(255, 255, 255, 0.45);
}

.taskbar .focus {
    background-color: rgba(255, 255, 255, 0.4);
    border-color: #eee;
}

.taskbar .stacked {
    padding-right: 4px;
    box-shadow: inset -4px 0 0 -1px rgba(70, 75, 75, 0.6), inset -5px 0 0 -1px rgba(255, 255, 255, 0.45);
}

.tray {
    display: flex;
    align-items: center;
    gap: 11px;
    margin-left: auto;
    color: #fff;
}

.tray > svg:first-child {
    margin-right: 6px;
}

.clock {
    display: flex;
    flex-direction: column;
    gap: 2px;
    margin-left: 8px;
    padding-top: 1px;
    text-align: center;
}
```
